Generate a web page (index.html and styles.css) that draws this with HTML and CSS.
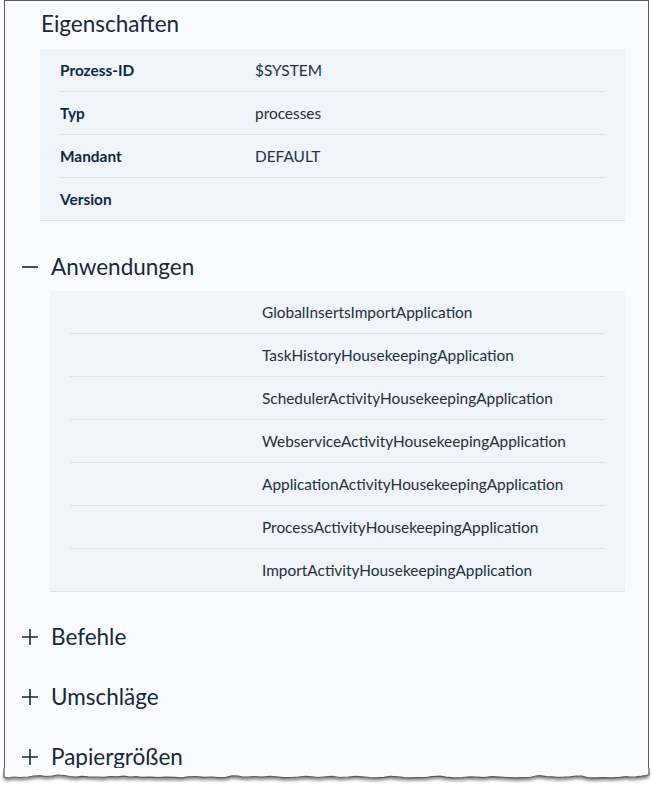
FILE: index.html
```html
<!DOCTYPE html>
<html lang="de">
<head>
<meta charset="utf-8">
<link rel="stylesheet" href="styles.css">
</head>
<body>
<div class="frame">
  <div class="content">
  <section class="props">
    <h2 class="title">Eigenschaften</h2>
    <div class="box">
      <div class="row"><span class="label">Prozess-ID</span><span class="value">$SYSTEM</span></div>
      <div class="row"><span class="label">Typ</span><span class="value">processes</span></div>
      <div class="row"><span class="label">Mandant</span><span class="value">DEFAULT</span></div>
      <div class="row"><span class="label">Version</span><span class="value"></span></div>
    </div>
  </section>

  <section class="group open">
    <h2 class="group-head"><svg class="toggle" viewBox="0 0 16 16"><path d="M0 8H16"/></svg>Anwendungen</h2>
    <div class="box apps">
      <div class="row"><span class="label"></span><span class="value">GlobalInsertsImportApplication</span></div>
      <div class="row"><span class="label"></span><span class="value">TaskHistoryHousekeepingApplication</span></div>
      <div class="row"><span class="label"></span><span class="value">SchedulerActivityHousekeepingApplication</span></div>
      <div class="row"><span class="label"></span><span class="value">WebserviceActivityHousekeepingApplication</span></div>
      <div class="row"><span class="label"></span><span class="value">ApplicationActivityHousekeepingApplication</span></div>
      <div class="row"><span class="label"></span><span class="value">ProcessActivityHousekeepingApplication</span></div>
      <div class="row"><span class="label"></span><span class="value">ImportActivityHousekeepingApplication</span></div>
    </div>
  </section>

  <section class="group">
    <h2 class="group-head"><svg class="toggle" viewBox="0 0 16 16"><path d="M0 8H16M8 0V16"/></svg>Befehle</h2>
  </section>
  <section class="group">
    <h2 class="group-head"><svg class="toggle" viewBox="0 0 16 16"><path d="M0 8H16M8 0V16"/></svg>Umschläge</h2>
  </section>
  <section class="group">
    <h2 class="group-head"><svg class="toggle" viewBox="0 0 16 16"><path d="M0 8H16M8 0V16"/></svg>Papiergrößen</h2>
  </section>
  </div>

  <svg class="torn" viewBox="0 0 653 20" preserveAspectRatio="none">
    <defs>
      <filter id="sh" x="-5%" y="-50%" width="110%" height="250%">
        <feGaussianBlur in="SourceAlpha" stdDeviation="1.6"/>
        <feOffset dx="0" dy="2.5"/>
        <feComponentTransfer><feFuncA type="linear" slope="0.45"/></feComponentTransfer>
        <feMerge><feMergeNode/><feMergeNode in="SourceGraphic"/></feMerge>
      </filter>
    </defs>
    <path class="paper-cut" d="M0 4 L4 4 L4 -2 L649 -2 L649 4 L653 4 L653 20 L0 20 Z" fill="#fff"/>
    <path class="edge-fill" filter="url(#sh)" fill="#f9fbfe" stroke="none"
      d="M4 -2 L4 7 L8 8 L14 7 L20 7.5 L28 7 L34 6 L40 5.6 L46 6.5 L52 6 L58 5 L64 5.5 L70 6.5 L76 7.2 L82 6.3 L88 6.8 L96 7 L104 7.4 L110 6.5 L118 6.8 L124 6.2 L130 7 L136 6.6 L142 7.3 L150 7.1 L158 7.5 L166 7.2 L174 7.4 L182 7.8 L188 6.8 L196 6.5 L204 7.3 L212 7 L218 7.6 L226 7.4 L232 5.8 L238 6 L242 6.9 L248 7.2 L254 6.5 L262 7 L270 6.4 L276 6.8 L284 7.7 L292 7.5 L298 7.2 L306 6.4 L312 6.9 L318 7.5 L326 6.9 L332 6.4 L340 7.5 L348 7 L356 6.3 L362 6.8 L370 7.5 L376 7.8 L384 7.3 L390 6.3 L398 6.9 L404 7.6 L410 7.8 L418 7.6 L426 7.5 L432 6.6 L440 6.1 L446 7.2 L454 7.8 L462 7.5 L470 6.8 L476 7.2 L484 7.6 L492 6.6 L500 7.1 L508 7.5 L516 7.9 L522 7.7 L530 7.5 L536 6 L540 5.6 L546 6.6 L552 6.8 L558 7.4 L564 7.2 L570 6.8 L576 6 L582 6.2 L588 7.8 L596 7.9 L604 7.6 L612 7.8 L620 7.3 L626 6.6 L630 7.2 L636 6.9 L642 6.2 L646 5.6 L649 4.8 L649 -2 Z"/>
    <path class="edge-line" fill="none" stroke="#5a5a5a" stroke-width="1.2"
      d="M4 -2 L4 7 L8 8 L14 7 L20 7.5 L28 7 L34 6 L40 5.6 L46 6.5 L52 6 L58 5 L64 5.5 L70 6.5 L76 7.2 L82 6.3 L88 6.8 L96 7 L104 7.4 L110 6.5 L118 6.8 L124 6.2 L130 7 L136 6.6 L142 7.3 L150 7.1 L158 7.5 L166 7.2 L174 7.4 L182 7.8 L188 6.8 L196 6.5 L204 7.3 L212 7 L218 7.6 L226 7.4 L232 5.8 L238 6 L242 6.9 L248 7.2 L254 6.5 L262 7 L270 6.4 L276 6.8 L284 7.7 L292 7.5 L298 7.2 L306 6.4 L312 6.9 L318 7.5 L326 6.9 L332 6.4 L340 7.5 L348 7 L356 6.3 L362 6.8 L370 7.5 L376 7.8 L384 7.3 L390 6.3 L398 6.9 L404 7.6 L410 7.8 L418 7.6 L426 7.5 L432 6.6 L440 6.1 L446 7.2 L454 7.8 L462 7.5 L470 6.8 L476 7.2 L484 7.6 L492 6.6 L500 7.1 L508 7.5 L516 7.9 L522 7.7 L530 7.5 L536 6 L540 5.6 L546 6.6 L552 6.8 L558 7.4 L564 7.2 L570 6.8 L576 6 L582 6.2 L588 7.8 L596 7.9 L604 7.6 L612 7.8 L620 7.3 L626 6.6 L630 7.2 L636 6.9 L642 6.2 L646 5.6 L649 4.8 L649 -2"/>
  </svg>
</div>
</body>
</html>
```
FILE: styles.css
```css
* { box-sizing: border-box; }
html, body { margin: 0; padding: 0; background: #ffffff; }
body {
  font-family: Lato, "Open Sans", sans-serif;
  color: #1b2b3b;
  width: 653px;
  height: 787px;
  overflow: hidden;
}
.frame {
  position: relative;
  margin-left: 4px;
  width: 645px;
  height: 787px;
  border: 1px solid #5a5a5a;
  border-bottom: none;
  background: #f9fbfe;
}
.content {
  height: 772px;
  overflow: hidden;
  padding-top: 9px;
}
.title {
  margin: 0 0 11px 36px;
  font-size: 22.5px;
  line-height: 28px;
  font-weight: 400;
  color: #16283b;
}
.box {
  margin-left: 35px;
  width: 585px;
  background: #f0f4fb;
  border-bottom: 1px solid #dde2e9;
  padding: 0 20px;
}
.row {
  display: flex;
  align-items: center;
  height: 43px;
  border-bottom: 1px solid #dde2e9;
  font-size: 15.4px;
}
.row:last-child { border-bottom: none; height: 42px; }
.label {
  width: 195px;
  flex: none;
  font-weight: 700;
  color: #0f2842;
}
.value { color: #23303e; }
.group-head {
  display: flex;
  align-items: center;
  margin: 0;
  padding-left: 17px;
  font-size: 22.5px;
  line-height: 28px;
  font-weight: 400;
  color: #16283b;
}
.group.open .group-head { margin-top: 32px; margin-bottom: 10px; }
.toggle {
  width: 16px;
  height: 16px;
  margin-right: 13px;
  flex: none;
  stroke: #16283b;
  stroke-width: 1.6;
  fill: none;
}
.apps { margin-left: 45px; width: 575px; }
.apps .label { width: 192px; }
.group + .group .group-head { margin-top: 32px; }
.group.open + .group .group-head { margin-top: 31px; }
.torn {
  position: absolute;
  left: -5px;
  top: 769px;
  width: 653px;
  height: 20px;
  overflow: visible;
}
```
